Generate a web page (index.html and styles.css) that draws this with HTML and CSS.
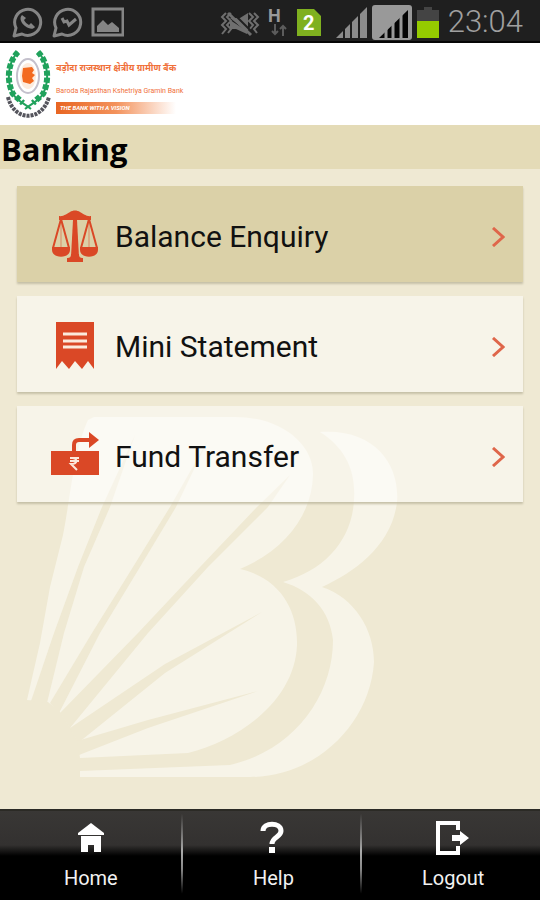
FILE: index.html
```html
<!DOCTYPE html>
<html lang="en">
<head>
    <meta charset="UTF-8">
    <meta name="viewport" content="width=device-width, initial-scale=1.0">
    <title>Banking</title>
    <link rel="stylesheet" href="styles.css">
</head>
<body>
    <div class="status-bar">
        <svg class="notifications" width="112" height="32" viewBox="0 0 112 32" fill="none" stroke="#858585" stroke-width="3">
            <path d="M2 30 L4 22 A13 13 0 1 1 10 28 Z" stroke-linejoin="round"/>
            <path d="M10 9 c-3 3 -1 8 3 11 c4 3 8 4 10 1 l-4 -4 l-2 2 c-2 -1 -4 -3 -5 -5 l2 -2 z" fill="#858585" stroke="none"/>
            <path d="M42 30 L44 22 A13 13 0 1 1 50 28 Z" stroke-linejoin="round"/>
            <path d="M50 12 L52 16 L55 15 L57 19 L64 13" stroke-width="3"/>
            <rect x="81" y="3" width="30" height="26"/>
            <path d="M85 26 V20 L91 14 L96 19 L100 16 L107 22 V26 Z" fill="#858585" stroke="none"/>
        </svg>

        <div class="status-right">
            <svg width="222" height="36" viewBox="0 0 222 36">
                <!-- vibrate / muted -->
                <g fill="none" stroke="#6f6f6f" stroke-width="2">
                    <path d="M6 9 L2 13 L6 17 L2 21 L6 25 L2 30 M11 9 L7 13 L11 17 L7 21 L11 25 L8 29"/>
                    <path d="M29 9 L33 13 L29 17 L33 21 L29 26 M34 9 L38 13 L34 17 L38 21 L34 25 L37 29"/>
                </g>
                <path d="M10 14 L28 28 V9 L20 14 Z" fill="#6f6f6f"/>
                <path d="M10 16 L10 25 H16 L27 30 V27 Z" fill="#6f6f6f"/>
                <path d="M11 7 L33 29" stroke="#1f1f1f" stroke-width="2"/>
                <path d="M8 9 L31 31" stroke="#6f6f6f" stroke-width="3"/>
                <!-- data connection -->
                <text x="48" y="18" class="data-type">H</text>
                <path d="M55 20 V30 M52 27 L55 30 L58 27 M63 32 V22 M60 25 L63 22 L66 25" fill="none" stroke="#5c5c5c" stroke-width="2"/>
                <!-- sim card -->
                <path d="M77 5 H94 L101 12 V32 H77 Z" fill="#7fb01f"/>
                <text x="83" y="26" class="sim">2</text>
                <!-- signal -->
                <path d="M116 34 L147 3 V34 Z" fill="#8c8c8c"/>
                <path d="M124 20 V34 M131 14 V34 M139 8 V34" stroke="#1f1f1f" stroke-width="2"/>
                <rect x="152" y="1" width="40" height="35" rx="3" fill="#999"/>
                <path d="M159 34 L188 6 V34 Z" fill="#050505"/>
                <path d="M166 20 V34 M173 14 V34 M181 8 V34" stroke="#999" stroke-width="3"/>
                <!-- battery -->
                <path d="M197 6 H204 V3 H212 V6 H219 V17 H197 Z" fill="#444"/>
                <rect x="197" y="17" width="22" height="17" fill="#95cb00"/>
            </svg>
            <span class="clock">23:04</span>
        </div>
    </div>

    <header class="bank-header">
        <svg class="emblem" width="50" height="74" viewBox="0 0 50 74">
            <ellipse cx="23" cy="28" rx="11" ry="17" fill="#fff" stroke="#c4c0cc" stroke-width="2"/>
            <ellipse cx="23" cy="28" rx="8" ry="13" fill="#fdebdd"/>
            <path d="M18 20 L27 19 L29 22 L27 25 L30 27 L27 30 L29 33 L25 36 L18 34 L17 28 Z" fill="#f36a20"/>
            <g fill="none" stroke="#20a25c">
                <path d="M13 4 C3 14 1 32 8 46 C12 53 19 55 26 61" stroke-width="2"/>
                <path d="M33 4 C43 14 45 32 38 46 C34 53 27 55 20 61" stroke-width="2"/>
                <path d="M13 4 C3 14 1 32 8 46 L18 55" stroke-width="6" stroke-dasharray="5 2"/>
                <path d="M33 4 C43 14 45 32 38 46 L28 55" stroke-width="6" stroke-dasharray="5 2"/>
            </g>
            <path d="M3 49 C9 74 37 74 44 49" fill="none" stroke="#55555d" stroke-width="4" stroke-dasharray="3 1"/>
        </svg>
        <div class="bank-name">
            <p class="name-hi" lang="hi">बड़ौदा राजस्थान क्षेत्रीय ग्रामीण बैंक</p>
            <p class="name-en">Baroda Rajasthan Kshetriya Gramin Bank</p>
            <p class="tagline">THE BANK WITH A VISION</p>
        </div>
    </header>

    <h1>Banking</h1>

    <main>
        <svg class="watermark" width="380" height="372" viewBox="22 408 380 372">
            <g fill="#f7f4e8">
                <path d="M27 700 L40 643 L50 587 L63 535 C70 500 74 450 88 420 L94 417 H235 C282 417 314 445 313 475 C312 515 285 550 240 569 C280 578 298 610 297 645 C295 700 240 740 188 753 L80 758 L78 742 L70 727 L60 712 L48 702 Z"/>
                <path d="M320 432 C375 428 400 465 397 502 C392 545 355 572 322 587 C355 598 374 630 374 662 C370 725 315 777 250 777 H80 V771 L230 765 C295 750 333 695 333 640 C330 610 310 590 283 582 C325 570 352 540 354 500 C356 470 345 448 320 432 Z"/>
            </g>
            <g fill="#efe9d3">
                <path d="M31 701 L54 633 L78 567 L102 507 L135 435 L110 507 L84 567 L64 633 L47 703 Z"/>
                <path d="M50 703 L92 633 L133 567 L170 507 L208 440 L176 507 L140 567 L100 633 L59 713 Z"/>
                <path d="M60 713 L138 633 L200 567 L257 507 L290 475 L268 507 L208 567 L148 633 L70 728 Z"/>
                <path d="M70 728 L165 664 L262 612 L165 673 L78 743 Z"/>
                <path d="M77 741 L148 720 L258 691 L148 728 L79 755 Z"/>
            </g>
        </svg>

        <nav class="menu">
            <a href="#" class="menu-item selected">
                <svg class="icon" width="48" height="56" viewBox="0 0 48 56">
                    <g fill="#da4826">
                        <path d="M8 7 C12 8 17 4 19 3 C22 1 26 1 29 3 C31 4 36 8 40 7 V11 H8 Z"/>
                        <path d="M22 11 H26 L28 48 H20 Z"/>
                        <path d="M16 53 V49 C19 49 20 48 20 45 H28 C28 48 29 49 32 49 V53 Z"/>
                        <path d="M1 38 H19 V41 C19 50 1 50 1 41 Z M29 38 H47 V41 C47 50 29 50 29 41 Z"/>
                    </g>
                    <path d="M10 10 L2 39 M10 10 L18 39 M38 10 L30 39 M38 10 L46 39" fill="none" stroke="#da4826" stroke-width="2"/>
                    <path d="M10 10 V39 M38 10 V39" stroke="#da4826" opacity=".5"/>
                </svg>
                <span class="label">Balance Enquiry</span>
                <svg class="arrow" width="14" height="20" viewBox="0 0 14 20"><path d="M2 1 L12 10 L2 19"/></svg>
            </a>
            <a href="#" class="menu-item">
                <svg class="icon" width="48" height="56" viewBox="0 0 48 56">
                    <path d="M5 3 H43 V50 L37 42 L31 50 L24 42 L18 50 L11 42 L5 50 Z" fill="#da4826"/>
                    <path d="M12 15 H36 M12 22 H36 M12 28 H36" stroke="#fbe9dc" stroke-width="3"/>
                </svg>
                <span class="label">Mini Statement</span>
                <svg class="arrow" width="14" height="20" viewBox="0 0 14 20"><path d="M2 1 L12 10 L2 19"/></svg>
            </a>
            <a href="#" class="menu-item">
                <svg class="icon" width="48" height="56" viewBox="0 0 48 56">
                    <path d="M0 22 H48 V46 H0 Z" fill="#da4826"/>
                    <path d="M23 23 V16 Q23 11 28 11 H39" fill="none" stroke="#da4826" stroke-width="4"/>
                    <path d="M38 3 L48 11 L38 19 Z" fill="#da4826"/>
                    <path d="M19 29 H28 M19 32 H28 M20 29 C27 28 27 35 20 35 L26 41" fill="none" stroke="#fbe9dc" stroke-width="2"/>
                </svg>
                <span class="label">Fund Transfer</span>
                <svg class="arrow" width="14" height="20" viewBox="0 0 14 20"><path d="M2 1 L12 10 L2 19"/></svg>
            </a>
        </nav>
    </main>

    <footer>
        <a href="#" class="tab">
            <svg width="36" height="36" viewBox="0 0 36 36" fill="#fff">
                <path d="M18 4 L31 14 V16 H5 V14 Z"/>
                <path d="M8 17 H28 V33 H21 V26 H15 V33 H8 Z"/>
            </svg>
            <span>Home</span>
        </a>
        <a href="#" class="tab">
            <svg width="36" height="36" viewBox="0 0 36 36">
                <path d="M8 12 C8 3 26 3 26 12 C26 18 17 18 17 25" fill="none" stroke="#fff" stroke-width="5"/>
                <rect x="14" y="28" width="6" height="6" fill="#fff"/>
            </svg>
            <span>Help</span>
        </a>
        <a href="#" class="tab">
            <svg width="36" height="36" viewBox="0 0 36 36">
                <path d="M23 11 V4 H3 V34 H23 V27" fill="none" stroke="#fff" stroke-width="4"/>
                <path d="M17 16 H25 V12 L34 19 L25 26 V22 H17 Z" fill="#fff"/>
            </svg>
            <span>Logout</span>
        </a>
    </footer>
</body>
</html>
```
FILE: styles.css
```css
* {
    box-sizing: border-box;
    margin: 0;
    padding: 0;
}

body {
    font-family: Roboto, "Liberation Sans", sans-serif;
    background: #efe9d3;
    min-height: 100vh;
    display: flex;
    flex-direction: column;
}

a {
    text-decoration: none;
}

/* Phone status bar */
.status-bar {
    display: flex;
    justify-content: space-between;
    align-items: center;
    height: 43px;
    padding: 2px 17px 0 12px;
    background: #1f1f1f;
    border-bottom: 2px solid #050505;
}

.status-right {
    display: flex;
    align-items: center;
    gap: 6px;
}

.clock {
    font-size: 31px;
    font-weight: 300;
    color: #a0a0a0;
}

.data-type {
    font-size: 18px;
    font-weight: 700;
    fill: #999;
}

.sim {
    font-size: 20px;
    font-weight: 700;
    fill: #fff;
}

/* Bank logo */
.bank-header {
    display: flex;
    align-items: center;
    gap: 1px;
    height: 82px;
    padding: 2px 5px 0;
    background: #fff;
}

.bank-name {
    color: #f0703a;
    white-space: nowrap;
}

.name-hi {
    font-family: "Noto Sans", sans-serif;
    font-size: 9px;
    font-weight: 700;
    line-height: 24px;
}

.name-en {
    font-size: 7px;
    line-height: 22px;
}

.tagline {
    width: 120px;
    padding-left: 4px;
    font-size: 6px;
    font-weight: 700;
    font-style: italic;
    line-height: 12px;
    color: #fff;
    background: linear-gradient(to right, #e86522, #f3925c 50%, #fff);
}

h1 {
    padding: 4px 1px 0;
    font-family: "Open Sans", "Noto Sans", sans-serif;
    font-size: 31px;
    font-weight: 700;
    line-height: 40px;
    color: #000;
    background: #e4dbb7;
}

/* Menu */
main {
    position: relative;
    flex: 1;
    padding: 17px;
}

.watermark {
    position: absolute;
    left: 22px;
    bottom: 29px;
}

.menu {
    position: relative;
    display: flex;
    flex-direction: column;
    gap: 14px;
}

.menu-item {
    display: flex;
    align-items: center;
    height: 96px;
    padding: 5px 18px 0 34px;
    color: #111;
    background: rgba(255, 255, 255, 0.5);
    box-shadow: 0 2px 2px #c6c0a8;
}

.menu-item.selected {
    background: #dbd1a8;
}

.icon {
    margin-right: 16px;
}

.label {
    flex: 1;
    font-size: 30px;
}

.arrow path {
    fill: none;
    stroke: #df664a;
    stroke-width: 3;
}

/* Bottom tabs */
footer {
    display: grid;
    grid-template-columns: repeat(3, 1fr);
    height: 91px;
    padding-left: 1px;
    border-top: 2px solid #2b2a25;
    background: linear-gradient(#393735 0, #333130 34px, #000 45px);
}

.tab {
    display: flex;
    flex-direction: column;
    align-items: center;
    gap: 11px;
    padding-top: 8px;
    font-size: 20px;
    line-height: 24px;
    color: #f2f2f2;
}

.tab + .tab {
    padding-left: 4px;
    border-left: 2px solid;
    border-image: linear-gradient(transparent 4%, #aaa 45%, #888 65%, transparent 92%) 1;
}
```
